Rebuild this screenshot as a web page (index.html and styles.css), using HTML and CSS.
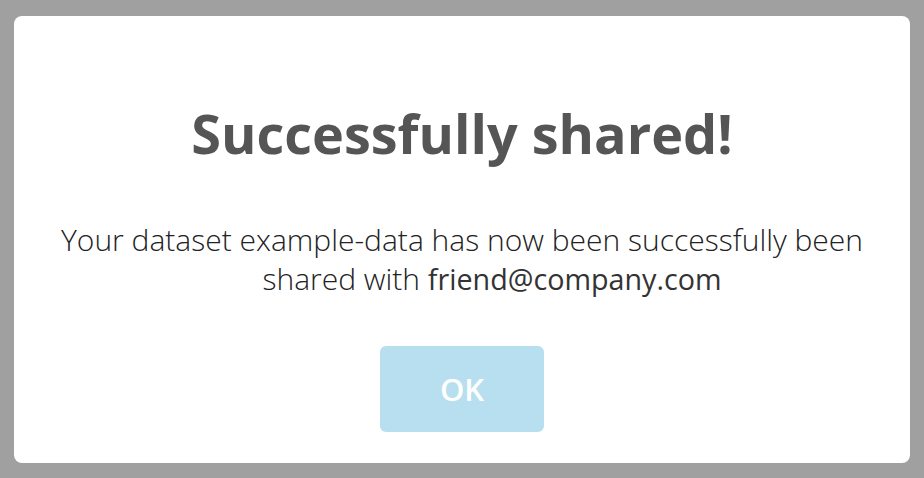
FILE: index.html
```html
<!DOCTYPE html>
<html lang="en">
<head>
    <meta charset="UTF-8" />
    <meta name="viewport" content="width=device-width, initial-scale=1" />
    <title>Share dataset</title>
    <link rel="stylesheet" href="styles.css">
</head>
<body>
    <div class="modal">
        <h1 class="modal-title">Successfully shared!</h1>
        <p class="modal-text">
            Your dataset example-data has now been successfully been<br>
            <span class="recipient">shared with <span class="email">friend@company.com</span></span>
        </p>
        <button class="btn-ok">OK</button>
    </div>
</body>
</html>
```

FILE: styles.css
```css
/* overlay + share confirmation modal */
body {
    margin: 0;
    padding: 16px 14px 15px;
    background: #a0a0a0;
    font-family: 'Open Sans', 'Noto Sans', sans-serif;
    height: 100vh;
    box-sizing: border-box;
}
.modal {
    background: #fff;
    border-radius: 8px;
    height: 100%;
    display: flex;
    flex-direction: column;
    align-items: center;
    box-sizing: border-box;
    padding-top: 90px;
}
.modal-title {
    margin: 0;
    font-size: 54px;
    font-weight: 700;
    color: #555;
    line-height: 1;
}
.modal-text {
    margin: 60px 0 0;
    width: 840px;
    text-align: center;
    font-size: 30px;
    font-weight: 300;
    line-height: 39px;
    color: #222;
}
.recipient {
    padding-left: 60px;
}
.email {
    font-size: 28.7px;
    font-weight: 400;
    color: #333;
}
.btn-ok {
    margin-top: 48px;
    width: 164px;
    height: 86px;
    border: none;
    border-radius: 6px;
    background: #b8dff0;
    color: #fff;
    font-family: 'Open Sans', sans-serif;
    font-size: 31px;
    font-weight: 600;
    cursor: pointer;
}
```
